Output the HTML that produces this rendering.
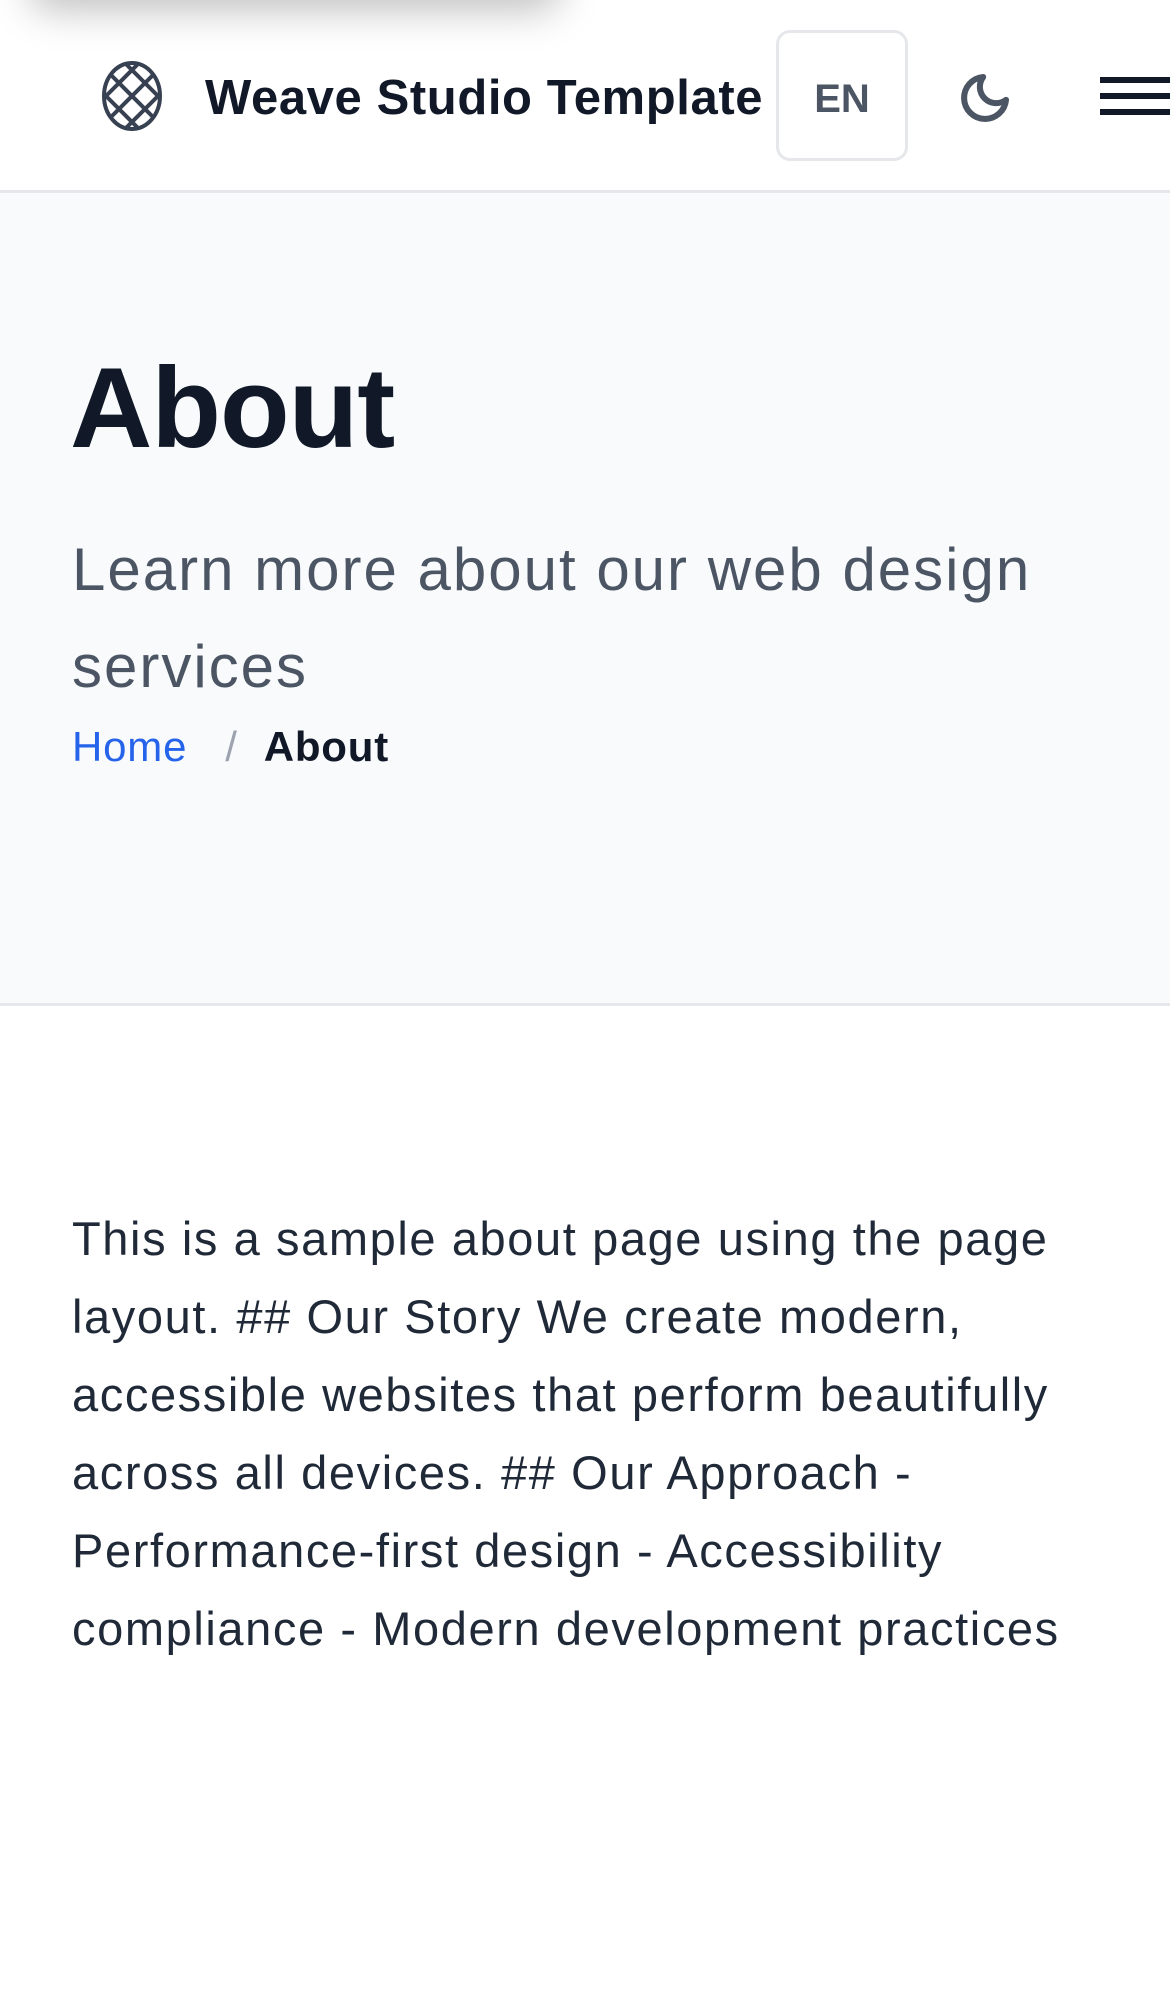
<!DOCTYPE html>
<html><head><meta charset="utf-8"><style>
*{margin:0;padding:0;box-sizing:border-box}
body{width:1170px;height:1992px;background:#fff;font-family:"Liberation Sans",sans-serif;position:relative;overflow:hidden}
.shadow{position:absolute;left:30px;top:-80px;width:530px;height:80px;background:#fff;box-shadow:0 10px 40px rgba(0,0,0,.25);border-radius:20px;z-index:5}
header{position:absolute;top:0;left:0;width:1170px;height:193px;border-bottom:3px solid #e5e7eb;background:#fff}
.logo{position:absolute;left:100px;top:60px}
.brand{position:absolute;left:205px;top:70px;font-size:49px;font-weight:bold;color:#111827;letter-spacing:0.6px;white-space:nowrap}
.en{position:absolute;left:776px;top:30px;width:132px;height:131px;border:3px solid #e5e7eb;border-radius:14px;font-size:40px;font-weight:bold;color:#4b5563;text-align:center;line-height:133px;background:#fff}
.moon{position:absolute;left:956px;top:70px}
.ham{position:absolute;left:1100px;top:77px;width:70px}
.ham i{display:block;height:6px;background:#111827;margin-bottom:10px}
.hero{position:absolute;top:193px;left:0;width:1170px;height:813px;background:#f8fafc;border-bottom:3px solid #e5e7eb}
h1{position:absolute;left:70px;top:150px;font-size:114px;font-weight:bold;color:#111827;letter-spacing:-1px}
.sub{position:absolute;left:72px;top:328px;width:1080px;font-size:60px;line-height:97px;color:#4b5563;letter-spacing:2px}
.bc{position:absolute;left:72px;top:530px;font-size:42px;white-space:nowrap;letter-spacing:0.8px}
.bc a{color:#2563eb;text-decoration:none}
.bc .s{color:#9ca3af;margin:0 26px 0 38px}
.bc b{color:#111827;font-weight:600}
.body{position:absolute;left:72px;top:1200px;width:1060px;font-size:47px;line-height:78px;color:#1f2937;letter-spacing:1.6px}
</style></head><body>
<div class="shadow"></div>
<header>
<svg class="logo" width="64" height="72" viewBox="0 0 64 72" fill="none" stroke="#374151" stroke-width="4">
<ellipse cx="32" cy="36" rx="28" ry="33"/>
<path d="M10 14 L54 58 M4 34 L38 68 M26 4 L60 38 M54 14 L10 58 M60 34 L26 68 M38 4 L4 38"/>
</svg>
<div class="brand">Weave Studio Template</div>
<div class="en">EN</div>
<svg class="moon" width="58" height="56" viewBox="0 0 24 24" fill="none" stroke="#4b5563" stroke-width="2.6" stroke-linecap="round" stroke-linejoin="round"><path d="M21 12.8A9 9 0 1 1 11.2 3a7 7 0 0 0 9.8 9.8z"/></svg>
<div class="ham"><i></i><i></i><i></i></div>
</header>
<div class="hero">
<h1>About</h1>
<div class="sub">Learn more about our web design services</div>
<div class="bc"><a>Home</a><span class="s">/</span><b>About</b></div>
</div>
<div class="body">This is a sample about page using the page layout. ## Our Story We create modern, accessible websites that perform beautifully across all devices. ## Our Approach - Performance-first design - Accessibility compliance - Modern development practices</div>
</body></html>
